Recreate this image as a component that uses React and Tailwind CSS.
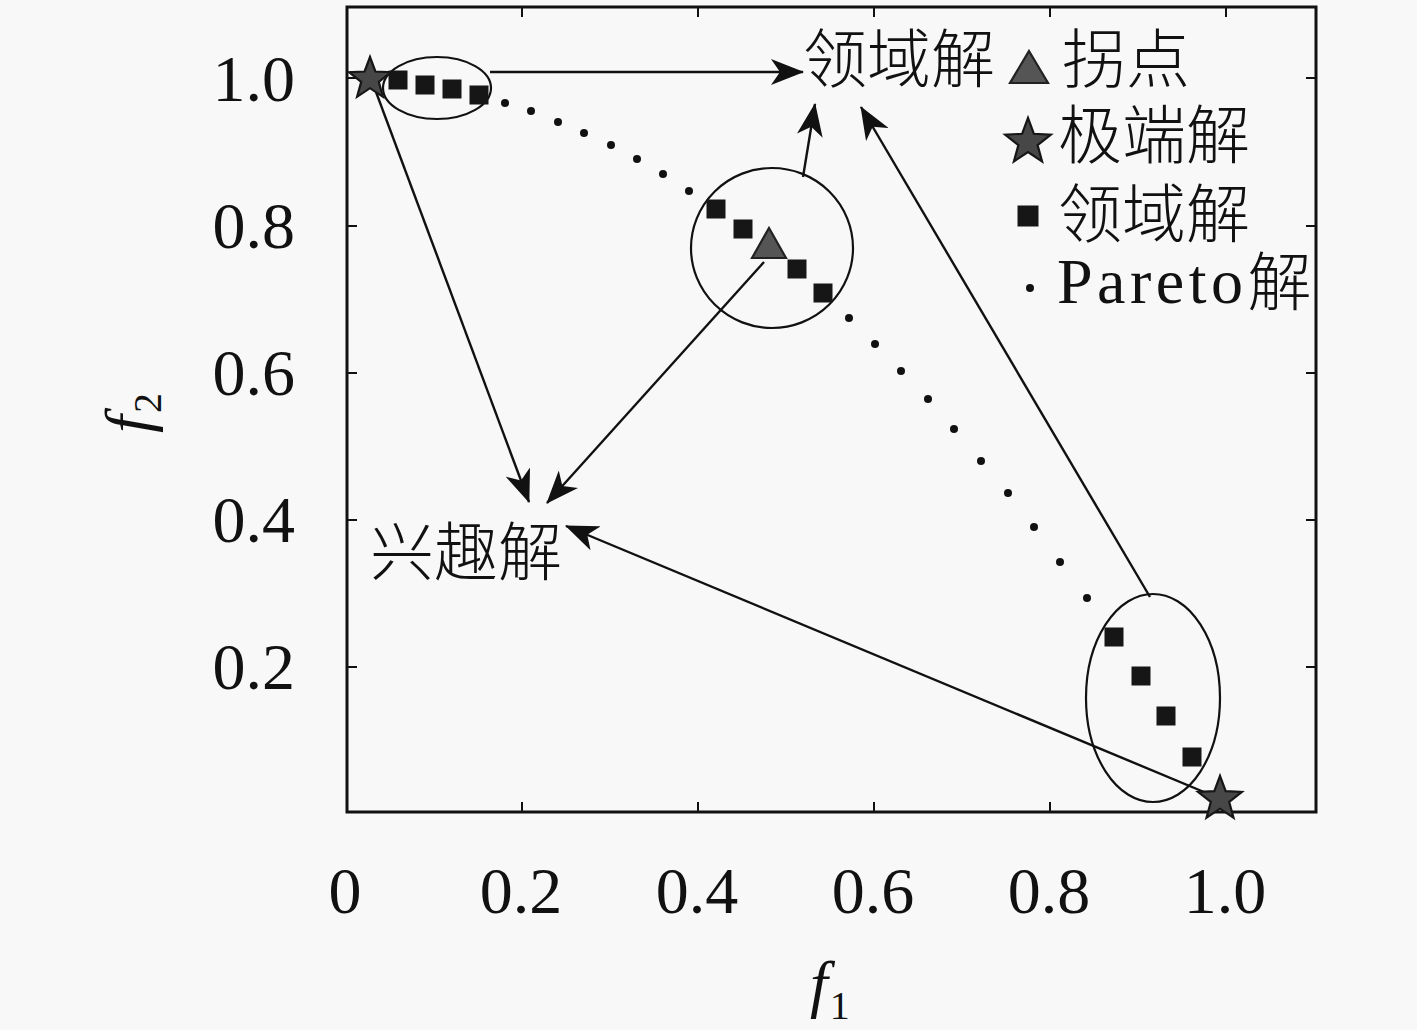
import React from 'react'

// pareto front dots (the ones not hidden under squares)
const dots = [
  [505, 103], [531, 111], [558, 122], [584, 133], [611, 145], [637, 159], [663, 174], [689, 191],
  [849, 318], [875, 344], [901, 371], [928, 399], [954, 429], [981, 461], [1008, 493], [1034, 527],
  [1060, 562], [1087, 598],
]

const squares = [
  [398, 80], [425, 85], [452, 89], [479, 95],
  [716, 209], [743, 229], [797, 269], [823, 293],
  [1114, 637], [1141, 676], [1166, 716], [1192, 757],
]

const arrows = [
  [490, 72, 803, 72],
  [803, 177, 815, 104],
  [1150, 597, 861, 107],
  [376, 92, 529, 502],
  [764, 262, 547, 503],
  [1216, 797, 566, 526],
]

const yTicks = [78, 226, 373, 520, 667]
const xTicks = [522, 698, 874, 1050, 1226]
const yLabels = ['1.0', '0.8', '0.6', '0.4', '0.2']
const xLabels = ['0', '0.2', '0.4', '0.6', '0.8', '1.0']

const cjk = "'Noto Sans CJK SC', sans-serif"
const serif = "'Liberation Serif', serif"

const starPoints = (cx, cy, R) =>
  Array.from({ length: 10 }, (_, i) => {
    const a = -Math.PI / 2 + (i * Math.PI) / 5
    const rad = i % 2 === 0 ? R : R * 0.42
    return `${(cx + rad * Math.cos(a)).toFixed(1)},${(cy + rad * Math.sin(a)).toFixed(1)}`
  }).join(' ')

const Star = ({ x, y, r = 22 }) => (
  <polygon points={starPoints(x, y, r)} fill="#474747" stroke="#161616" strokeWidth="2.2" strokeLinejoin="miter" />
)

const Tri = ({ x, top, bottom, half }) => (
  <polygon points={`${x},${top} ${x + half},${bottom} ${x - half},${bottom}`} fill="#555" stroke="#222" strokeWidth="2.2" />
)

const Square = ({ x, y, s = 19 }) => (
  <rect x={x - s / 2} y={y - s / 2} width={s} height={s} fill="#161616" />
)

const Plot = () => (
  <svg className="w-[980px] h-[830px] overflow-visible shrink-0" viewBox="340 0 980 830">
    <defs>
      <marker id="head" markerUnits="userSpaceOnUse" markerWidth="33" markerHeight="26" refX="32" refY="13" orient="auto">
        <path d="M0,0 L33,13 L0,26 L9,13 Z" fill="#111" />
      </marker>
    </defs>

    {/* frame + ticks */}
    <rect x="347" y="7" width="969" height="805" fill="none" stroke="#111" strokeWidth="3" />
    {yTicks.map((y) => (
      <g key={y} stroke="#111" strokeWidth="2">
        <line x1="347" y1={y} x2="357" y2={y} />
        <line x1="1316" y1={y} x2="1306" y2={y} />
      </g>
    ))}
    {xTicks.map((x) => (
      <g key={x} stroke="#111" strokeWidth="2">
        <line x1={x} y1="812" x2={x} y2="802" />
        <line x1={x} y1="7" x2={x} y2="17" />
      </g>
    ))}

    {/* groups */}
    <g fill="none" stroke="#111" strokeWidth="2.2">
      <ellipse cx="437" cy="88" rx="54" ry="31" />
      <ellipse cx="772" cy="248" rx="81" ry="80" />
      <ellipse cx="1153" cy="698" rx="67" ry="104" />
    </g>

    {dots.map(([x, y]) => (
      <circle key={`${x}-${y}`} cx={x} cy={y} r="4" fill="#111" />
    ))}
    {squares.map(([x, y]) => (
      <Square key={`${x}-${y}`} x={x} y={y} />
    ))}

    {arrows.map(([x1, y1, x2, y2]) => (
      <line key={`${x1}-${y1}`} x1={x1} y1={y1} x2={x2} y2={y2} stroke="#111" strokeWidth="2.4" markerEnd="url(#head)" />
    ))}

    <Tri x={769} top={228} bottom={258} half={17} />
    <Star x={370} y={79} r={22} />
    <Star x={1220} y={799} r={23} />

    {/* annotations */}
    <text x="803" y="82" fontSize="64" fontFamily={cjk} fontWeight="300" fill="#111">领域解</text>
    <text x="370" y="575" fontSize="64" fontFamily={cjk} fontWeight="300" fill="#111">兴趣解</text>

    {/* legend */}
    <Tri x={1029} top={51} bottom={83} half={19} />
    <text x="1062" y="82" fontSize="64" fontFamily={cjk} fontWeight="300" fill="#111">拐点</text>
    <Star x={1028} y={142} r={24} />
    <text x="1058" y="158" fontSize="64" fontFamily={cjk} fontWeight="300" fill="#111">极端解</text>
    <Square x={1028} y={216} s={21} />
    <text x="1058" y="237" fontSize="64" fontFamily={cjk} fontWeight="300" fill="#111">领域解</text>
    <circle cx="1030" cy="288" r="4" fill="#111" />
    <text x="1057" y="303" fontSize="64" fill="#111">
      <tspan fontFamily={serif} letterSpacing="4.5">Pareto</tspan>
      <tspan fontFamily={cjk} fontWeight="300" dy="2">解</tspan>
    </text>
  </svg>
)

const App = () => {
  return (
    <div className="w-[1417px] h-[1030px] bg-[#f8f8f8] text-[#111] flex flex-col font-['Liberation_Serif',serif] overflow-hidden">
      <div className="flex h-[830px] shrink-0">
        {/* y title */}
        <div className="w-[200px] shrink-0 flex items-center justify-center pl-[56px] pb-[4px]">
          <div className="-rotate-90 flex items-end leading-none">
            <span className="italic text-[64px]">f</span>
            <span className="text-[40px] mb-[-8px] ml-[2px]">2</span>
          </div>
        </div>
        {/* y tick labels */}
        <div className="w-[140px] shrink-0 flex flex-col pt-[5px] pr-[45px]">
          {yLabels.map((l) => (
            <div key={l} className="h-[147px] flex items-center justify-end text-[66px] leading-none">
              {l}
            </div>
          ))}
        </div>
        <Plot />
      </div>

      {/* x tick labels */}
      <div className="flex h-[122px] items-center pl-[257px] shrink-0">
        {xLabels.map((l) => (
          <div key={l} className="w-[176px] text-center text-[66px] leading-none">
            {l}
          </div>
        ))}
      </div>

      {/* x title */}
      <div className="flex pl-[810px] items-end leading-none">
        <span className="italic text-[64px]">f</span>
        <span className="text-[40px] mb-[-10px] ml-[2px]">1</span>
      </div>
    </div>
  )
}

export default App
